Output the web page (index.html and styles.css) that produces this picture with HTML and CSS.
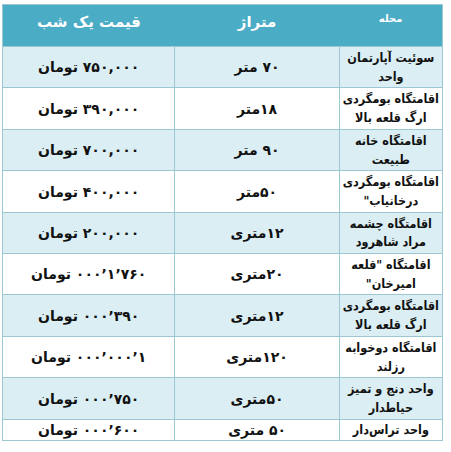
FILE: index.html
```html
<!DOCTYPE html>
<html lang="fa" dir="rtl">
<head>
<meta charset="utf-8">
<title>قیمت اقامتگاه‌ها</title>
<link rel="stylesheet" href="styles.css">
</head>
<body>
<table class="prices">
  <thead>
    <tr>
      <th class="c-name"><span class="small">محله</span></th>
      <th class="c-area">متراژ</th>
      <th class="c-price">قیمت یک شب</th>
    </tr>
  </thead>
  <tbody>
    <tr class="band"><td class="c-name">سوئیت آپارتمان<br>واحد</td><td class="c-area">۷۰ متر</td><td class="c-price">۷۵۰,۰۰۰ تومان</td></tr>
    <tr><td class="c-name">اقامتگاه بومگردی<br>ارگ قلعه بالا</td><td class="c-area">۱۸متر</td><td class="c-price">۳۹۰,۰۰۰ تومان</td></tr>
    <tr class="band"><td class="c-name">اقامتگاه خانه<br>طبیعت</td><td class="c-area">۹۰ متر</td><td class="c-price">۷۰۰,۰۰۰ تومان</td></tr>
    <tr><td class="c-name">اقامتگاه بومگردی<br>درخانیاب"</td><td class="c-area">۵۰متر</td><td class="c-price">۴۰۰,۰۰۰ تومان</td></tr>
    <tr class="band"><td class="c-name">اقامتگاه چشمه<br>مراد شاهرود</td><td class="c-area">۱۲متری</td><td class="c-price">۲۰۰,۰۰۰ تومان</td></tr>
    <tr><td class="c-name">اقامتگاه "قلعه<br>امیرخان"</td><td class="c-area">۲۰متری</td><td class="c-price">۷۶۰’۱’۰۰۰ تومان</td></tr>
    <tr class="band"><td class="c-name">اقامتگاه بومگردی<br>ارگ قلعه بالا</td><td class="c-area">۱۲متری</td><td class="c-price">۳۹۰’۰۰۰ تومان</td></tr>
    <tr><td class="c-name">اقامتگاه دوخوابه<br>رزلند</td><td class="c-area">۱۲۰متری</td><td class="c-price">۱’۰۰۰’۰۰۰ تومان</td></tr>
    <tr class="band"><td class="c-name">واحد دنج و تمیز<br>حیاطدار</td><td class="c-area">۵۰متری</td><td class="c-price">۷۵۰’۰۰۰ تومان</td></tr>
    <tr class="last"><td class="c-name">واحد تراس‌دار</td><td class="c-area">۵۰ متری</td><td class="c-price">۶۰۰’۰۰۰ تومان</td></tr>
  </tbody>
</table>
</body>
</html>
```

FILE: styles.css
```css
html, body {
  margin: 0;
  padding: 0;
  background: #ffffff;
}
body {
  padding: 4px 8px 0 2px;
  font-family: "DejaVu Sans", "Noto Sans", sans-serif;
  color: #111111;
}
.prices {
  direction: rtl;
  border-collapse: collapse;
  width: 441px;
  table-layout: fixed;
  border: 1px solid #9cc8d3;
}
.prices th {
  background: #4bacc6;
  color: #ffffff;
  font-weight: bold;
  height: 42px;
  vertical-align: middle;
  font-size: 15px;
  line-height: 18px;
  border: none;
  padding: 0 0 8px;
  box-sizing: border-box;
}
.prices th .small {
  font-size: 10px;
  display: block;
  padding-bottom: 6px;
}
.prices td {
  border: 1px solid #9cc8d3;
  text-align: center;
  vertical-align: middle;
  font-weight: bold;
  padding: 2px 2px 1px;
  line-height: 18.7px;
  white-space: nowrap;
}
.prices .band td {
  background: #daeef3;
}
.c-name { width: 103px; }
.c-area { width: 164px; }
.c-price { width: 172px; }
td.c-name {
  font-family: "DejaVu Sans Condensed", "DejaVu Sans", sans-serif;
  font-stretch: condensed;
  font-size: 12.5px;
}
td.c-area { font-size: 14px; }
td.c-price { font-size: 14px; }
.prices .last td { padding: 0 2px; line-height: 20px; }
.prices .last td.c-name { vertical-align: top; }
```
